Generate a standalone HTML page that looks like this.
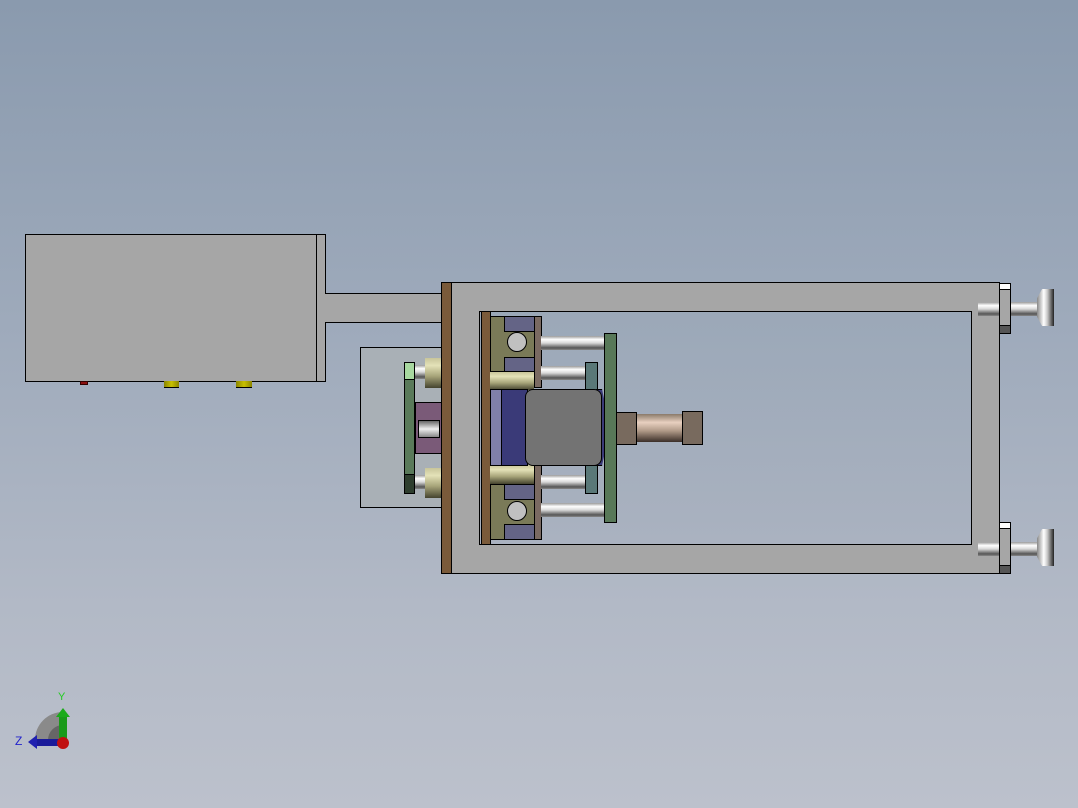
<!DOCTYPE html>
<html><head><meta charset="utf-8"><style>
body{margin:0;width:1078px;height:808px;overflow:hidden;position:relative;background:linear-gradient(180deg,#8a9aae 0%,#9eaabb 40%,#b2b9c6 75%,#bcc1cc 100%);font-family:"Liberation Sans",sans-serif}
div{position:absolute;box-sizing:border-box}
.b{border:1px solid #000}
.g{background:#a6a6a6}
.rod{background:linear-gradient(180deg,#9a9a9a 0%,#fff 25%,#d8d8d8 50%,#555 85%,#888 100%)}
.bush{background:linear-gradient(180deg,#c8c59a 0%,#e4e2b8 25%,#a8a57a 60%,#44432e 100%)}
</style></head><body>
<!-- left box -->
<div class="b g" style="left:25px;top:234px;width:301px;height:148px"></div>
<div class="b" style="left:316px;top:234px;width:10px;height:148px"></div>
<div style="left:80px;top:381px;width:8px;height:4px;background:#8a1010;border:1px solid #300"></div>
<div style="left:164px;top:381px;width:15px;height:7px;background:linear-gradient(90deg,#8a8400,#c8c000,#8a8400);border-bottom:1px solid #000"></div>
<div style="left:236px;top:381px;width:16px;height:7px;background:linear-gradient(90deg,#8a8400,#c8c000,#8a8400);border-bottom:1px solid #000"></div>
<!-- arm -->
<div class="b g" style="left:325px;top:293px;width:120px;height:30px;border-left:none"></div>
<!-- small gray box -->
<div class="b" style="left:360px;top:347px;width:84px;height:161px;background:#a9b0b6"></div>
<!-- left cylinders -->
<div class="rod" style="left:412px;top:365px;width:16px;height:14px"></div>
<div class="bush" style="left:425px;top:358px;width:18px;height:30px"></div>
<div class="rod" style="left:412px;top:475px;width:16px;height:14px"></div>
<div class="bush" style="left:425px;top:468px;width:18px;height:30px"></div>
<!-- green plate left -->
<div class="b" style="left:404px;top:362px;width:11px;height:132px;background:#5a7a5a"></div>
<div class="b" style="left:404px;top:362px;width:11px;height:18px;background:#a8d8a0"></div>
<div class="b" style="left:404px;top:474px;width:11px;height:20px;background:#2e3e2e"></div>
<!-- purple -->
<div class="b" style="left:415px;top:402px;width:28px;height:52px;background:#7a5a78"></div>
<div class="b" style="left:418px;top:420px;width:22px;height:18px;background:linear-gradient(180deg,#666,#eee,#888)"></div>
<!-- outer frame -->
<div class="b g" style="left:442px;top:282px;width:558px;height:292px"></div>
<div class="b" style="left:479px;top:311px;width:493px;height:234px;background:linear-gradient(180deg,#9ba8b8,#aab2c0)"></div>
<div class="b" style="left:441px;top:282px;width:11px;height:292px;background:#7a5a3a"></div>
<!-- inner brown plate -->
<div class="b" style="left:481px;top:311px;width:10px;height:234px;background:#7a5a3a"></div>
<!-- bearing blocks -->
<div class="b" style="left:490px;top:316px;width:46px;height:56px;background:#7a7a58"></div>
<div class="b" style="left:504px;top:316px;width:32px;height:16px;background:#646486"></div>
<div class="b" style="left:504px;top:357px;width:32px;height:15px;background:#646486"></div>
<div class="b" style="left:507px;top:332px;width:20px;height:20px;border-radius:50%;background:#c0c0c0"></div>
<div class="b" style="left:534px;top:316px;width:8px;height:72px;background:#7a6a62"></div>
<div class="b" style="left:490px;top:484px;width:46px;height:56px;background:#7a7a58"></div>
<div class="b" style="left:504px;top:484px;width:32px;height:16px;background:#646486"></div>
<div class="b" style="left:504px;top:524px;width:32px;height:16px;background:#646486"></div>
<div class="b" style="left:507px;top:501px;width:20px;height:20px;border-radius:50%;background:#c0c0c0"></div>
<div class="b" style="left:534px;top:465px;width:8px;height:75px;background:#7a6a62"></div>
<div class="bush" style="left:490px;top:372px;width:44px;height:18px"></div>
<div class="bush" style="left:490px;top:465px;width:44px;height:19px"></div>
<!-- rods -->
<div class="rod" style="left:541px;top:336px;width:64px;height:14px"></div>
<div class="rod" style="left:541px;top:366px;width:46px;height:14px"></div>
<div class="rod" style="left:541px;top:475px;width:46px;height:14px"></div>
<div class="rod" style="left:541px;top:503px;width:64px;height:14px"></div>
<!-- teal -->
<div class="b" style="left:585px;top:362px;width:13px;height:47px;background:#5a7878"></div>
<div class="b" style="left:585px;top:465px;width:13px;height:29px;background:#5a7878"></div>
<!-- motor -->
<div class="b" style="left:490px;top:389px;width:38px;height:77px;background:#3a3a78"></div>
<div class="b" style="left:490px;top:389px;width:12px;height:77px;background:#8080aa"></div>
<div class="b" style="left:596px;top:389px;width:10px;height:77px;background:#3a3a78;clip-path:polygon(0 0,60% 0,100% 25%,100% 75%,60% 100%,0 100%)"></div>
<div class="b" style="left:525px;top:389px;width:77px;height:77px;border-radius:8px;background:#737373"></div>
<!-- green plate right -->
<div class="b" style="left:604px;top:333px;width:13px;height:190px;background:#587858"></div>
<!-- cylinder right -->
<div class="b" style="left:616px;top:412px;width:21px;height:33px;background:#786a5e"></div>
<div style="left:637px;top:414px;width:46px;height:28px;background:linear-gradient(180deg,#8a7a6a,#e8d0c0 30%,#b09a88 60%,#3a2e28 100%)"></div>
<div class="b" style="left:682px;top:411px;width:21px;height:34px;background:#786a5e"></div>
<!-- right knobs -->
<div class="rod" style="left:978px;top:302px;width:62px;height:14px"></div>
<div class="b g" style="left:999px;top:283px;width:12px;height:51px"></div>
<div class="b" style="left:999px;top:283px;width:12px;height:7px;background:#fff"></div>
<div class="b" style="left:999px;top:325px;width:12px;height:9px;background:#555"></div>
<div style="left:1037px;top:289px;width:17px;height:37px;background:linear-gradient(90deg,#888,#fff 40%,#ccc 60%,#222);clip-path:polygon(0 25%,30% 0,100% 0,100% 100%,30% 100%,0 75%)"></div>
<div class="rod" style="left:978px;top:542px;width:62px;height:14px"></div>
<div class="b g" style="left:999px;top:522px;width:12px;height:52px"></div>
<div class="b" style="left:999px;top:522px;width:12px;height:7px;background:#fff"></div>
<div class="b" style="left:999px;top:565px;width:12px;height:9px;background:#555"></div>
<div style="left:1037px;top:529px;width:17px;height:37px;background:linear-gradient(90deg,#888,#fff 40%,#ccc 60%,#222);clip-path:polygon(0 25%,30% 0,100% 0,100% 100%,30% 100%,0 75%)"></div>
<!-- triad -->
<svg style="position:absolute;left:0;top:680px" width="100" height="80">
<path d="M63 60 L35 60 A28 28 0 0 1 63 32 Z" fill="#8a8a8a"/>
<path d="M63 60 L48 60 A15 15 0 0 1 63 45 Z" fill="#666"/>
<rect x="59" y="36" width="8" height="24" fill="#1a9a1a"/>
<path d="M56 37 L63 28 L70 37 Z" fill="#1aaa1a"/>
<rect x="36" y="59" width="26" height="7" fill="#1a1a9a"/>
<path d="M37 55 L28 62 L37 69 Z" fill="#2020b0"/>
<circle cx="63" cy="63" r="6" fill="#c01010"/>
<text x="58" y="20" font-size="11" fill="#2c2" font-family="Liberation Sans">Y</text>
<text x="15" y="65" font-size="12" fill="#22c" font-family="Liberation Sans">Z</text>
</svg>
</body></html>
